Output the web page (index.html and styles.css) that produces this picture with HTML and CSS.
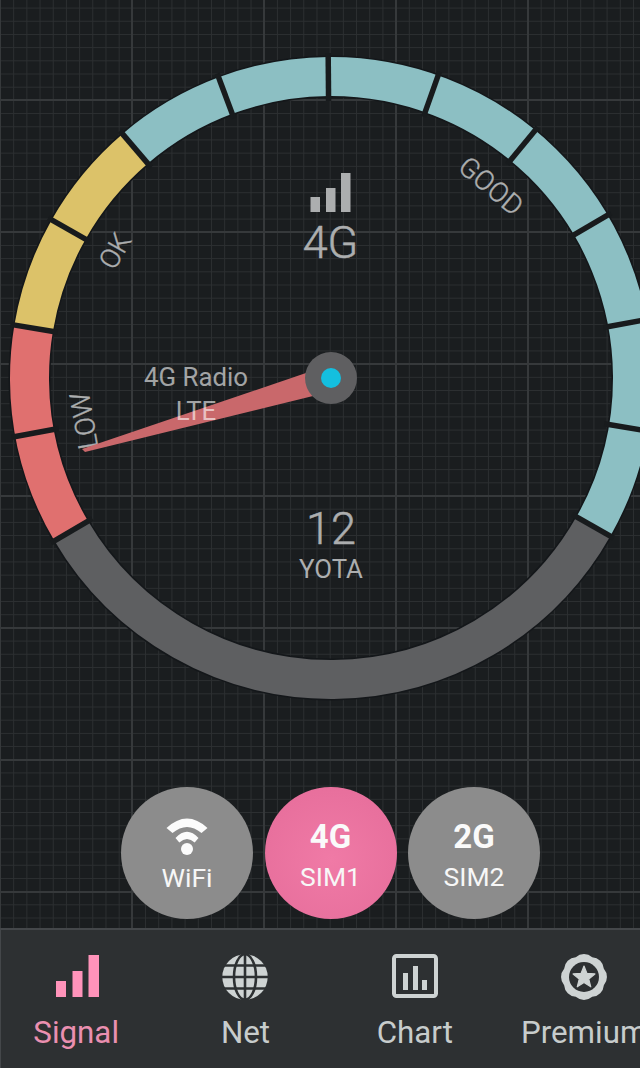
FILE: index.html
```html
<!DOCTYPE html>
<html lang="en">
<head>
<meta charset="utf-8">
<title>Signal</title>
<link rel="stylesheet" href="styles.css">
</head>
<body>
<div class="app">
  <main class="meter">
    <svg class="gauge" viewBox="0 0 640 787" width="640" height="787">
      <circle class="ring ring-edge" cx="331" cy="378" r="301.5"/>
      <g transform="rotate(-0.5 331 378)">
        <circle class="ring ring-off" cx="331" cy="378" r="301.5" pathLength="360" stroke-dasharray="120 240" stroke-dashoffset="-30"/>
        <circle class="ring ring-low" cx="331" cy="378" r="301.5" pathLength="360" stroke-dasharray="40 320" stroke-dashoffset="-150"/>
        <circle class="ring ring-ok" cx="331" cy="378" r="301.5" pathLength="360" stroke-dasharray="40 320" stroke-dashoffset="-190"/>
        <circle class="ring ring-good" cx="331" cy="378" r="301.5" pathLength="360" stroke-dasharray="160 200" stroke-dashoffset="-230"/>
        <line class="sep" x1="608" y1="378" x2="656" y2="378" transform="rotate(30 331 378)"/>
        <line class="sep" x1="608" y1="378" x2="656" y2="378" transform="rotate(10 331 378)"/>
        <line class="sep" x1="608" y1="378" x2="656" y2="378" transform="rotate(-10 331 378)"/>
        <line class="sep" x1="608" y1="378" x2="656" y2="378" transform="rotate(-30 331 378)"/>
        <line class="sep" x1="608" y1="378" x2="656" y2="378" transform="rotate(-50 331 378)"/>
        <line class="sep" x1="608" y1="378" x2="656" y2="378" transform="rotate(-70 331 378)"/>
        <line class="sep" x1="608" y1="378" x2="656" y2="378" transform="rotate(-90 331 378)"/>
        <line class="sep" x1="608" y1="378" x2="656" y2="378" transform="rotate(-110 331 378)"/>
        <line class="sep" x1="608" y1="378" x2="656" y2="378" transform="rotate(-130 331 378)"/>
        <line class="sep" x1="608" y1="378" x2="656" y2="378" transform="rotate(-150 331 378)"/>
        <line class="sep" x1="608" y1="378" x2="656" y2="378" transform="rotate(-170 331 378)"/>
        <line class="sep" x1="608" y1="378" x2="656" y2="378" transform="rotate(170 331 378)"/>
        <line class="sep" x1="608" y1="378" x2="656" y2="378" transform="rotate(150 331 378)"/>
      </g>

      <rect class="ink" x="310.5" y="197" width="9.5" height="15"/>
      <rect class="ink" x="326" y="188" width="9.5" height="24"/>
      <rect class="ink" x="341" y="173" width="9.5" height="39"/>

      <text class="t-big" x="330.5" y="258">4G</text>
      <text class="t-big" x="331" y="544">12</text>
      <text class="t-mid" x="331" y="578">YOTA</text>

      <text class="t-zone" transform="translate(115 251) rotate(-60) translate(0 9.5)">OK</text>
      <text class="t-zone" transform="translate(491 186) rotate(40) translate(0 9.5)">GOOD</text>
      <text class="t-zone" transform="translate(84 421) rotate(-100) translate(0 9.5)">LOW</text>

      <polygon class="needle" points="82,449 85,452 313,396 331,378 306,373"/>
      <text class="t-mid t-soft" x="196" y="386">4G Radio</text>
      <text class="t-mid t-soft" x="196" y="420">LTE</text>
      <circle class="hub" cx="331" cy="378" r="26"/>
      <circle class="hub-dot" cx="331" cy="378" r="10"/>
    </svg>

    <div class="modes">
      <button class="mode">
        <svg class="wifi" viewBox="-22 0 44 38" width="44" height="38">
          <path d="M-20.5 10Q0 -9 20.5 10L14.5 15Q0 3 -14.5 15Z"/>
          <path d="M-11.5 20Q0 7.5 11.5 20L7.7 24.5Q0 17.5 -7.7 24.5Z"/>
          <circle cx="0" cy="31" r="6"/>
        </svg>
        <span class="mode-sub">WiFi</span>
      </button>
      <button class="mode mode-on">
        <span class="mode-main">4G</span>
        <span class="mode-sub">SIM1</span>
      </button>
      <button class="mode">
        <span class="mode-main">2G</span>
        <span class="mode-sub">SIM2</span>
      </button>
    </div>
  </main>

  <nav class="tabs">
    <div class="tab tab-on">
      <svg class="tab-icon" viewBox="0 0 48 46" width="48" height="46">
        <rect x="4" y="27" width="10" height="16"/>
        <rect x="20.5" y="17" width="10" height="26"/>
        <rect x="36.5" y="1" width="10.5" height="42"/>
      </svg>
      <span>Signal</span>
    </div>
    <div class="tab">
      <svg class="tab-icon" viewBox="-24 -23 48 46" width="48" height="46">
        <circle r="22.7"/>
        <g class="globe-lines">
          <ellipse rx="11" ry="22.7"/>
          <line x1="0" y1="-23" x2="0" y2="23"/>
          <line x1="-23" y1="0" x2="23" y2="0"/>
          <line x1="-23" y1="-11.5" x2="23" y2="-11.5"/>
          <line x1="-23" y1="11.5" x2="23" y2="11.5"/>
        </g>
      </svg>
      <span>Net</span>
    </div>
    <div class="tab">
      <svg class="tab-icon" viewBox="0 0 48 46" width="48" height="46">
        <rect class="chart-box" x="3" y="2" width="42" height="40" rx="2.5"/>
        <rect x="12" y="19" width="5" height="17"/>
        <rect x="22" y="12" width="5" height="24"/>
        <rect x="31" y="26" width="5" height="10"/>
      </svg>
      <span>Chart</span>
    </div>
    <div class="tab">
      <svg class="tab-icon" viewBox="-24 -23 48 46" width="48" height="46">
        <path d="M8.23 -19.86A12.5 12.5 0 0 1 19.86 -8.23A12.5 12.5 0 0 1 19.86 8.23A12.5 12.5 0 0 1 8.23 19.86A12.5 12.5 0 0 1 -8.23 19.86A12.5 12.5 0 0 1 -19.86 8.23A12.5 12.5 0 0 1 -19.86 -8.23A12.5 12.5 0 0 1 -8.23 -19.86A12.5 12.5 0 0 1 8.23 -19.86Z"/>
        <circle class="badge-hole" r="15"/>
        <polygon class="badge-star" points="0,-11 2.94,-3.55 10.9,-3.05 4.76,2.05 6.76,9.8 0,5.5 -6.76,9.8 -4.76,2.05 -10.9,-3.05 -2.94,-3.55"/>
      </svg>
      <span>Premium</span>
    </div>
  </nav>
</div>
</body>
</html>
```

FILE: styles.css
```css
* { box-sizing: border-box; }

html, body {
  margin: 0;
  padding: 0;
  width: 640px;
  height: 1068px;
  overflow: hidden;
  background: #1a1d1f;
  font-family: Roboto, "Liberation Sans", sans-serif;
}

.app {
  display: flex;
  flex-direction: column;
  width: 640px;
  height: 1068px;
}

.meter {
  height: 928px;
  flex: none;
  background-color: #1a1d1f;
  background-image:
    linear-gradient(to right, #36393b 0, #36393b 2px, transparent 2px),
    linear-gradient(to bottom, #36393b 0, #36393b 2px, transparent 2px),
    linear-gradient(to right, #2c2f31 0, #2c2f31 1px, transparent 1px),
    linear-gradient(to bottom, #2c2f31 0, #2c2f31 1px, transparent 1px);
  background-size: 132px 132px, 132px 132px, 13.2px 13.2px, 13.2px 13.2px;
  background-position: -1px 0, 0 99px, 0 0, 0 7.6px;
}

.gauge { display: block; }

.ring { fill: none; stroke-width: 39; }
.ring-edge { stroke: #14171a; stroke-width: 42; }
.ring-off { stroke: #5e5f61; }
.ring-low { stroke: #e0706f; }
.ring-ok { stroke: #dcc269; }
.ring-good { stroke: #8cbfc3; }
.sep { stroke: #181b1d; stroke-width: 5.5; }

.ink { fill: #acaeaf; }
.needle { fill: #c9686b; }
.hub { fill: #5f5f61; }
.hub-dot { fill: #14bfdf; }

.gauge text { text-anchor: middle; fill: #acaeaf; }
.t-big { font-size: 45px; font-weight: 300; stroke: #acaeaf; stroke-width: 0.5px; }
.t-mid { font-size: 25.8px; font-weight: 400; }
.gauge .t-soft { fill: #ffffff; fill-opacity: 0.6; }
.t-zone { font-size: 27.5px; font-weight: 300; stroke: #acaeaf; stroke-width: 0.4px; }

.modes {
  display: flex;
  justify-content: center;
  gap: 11.5px;
  padding-left: 21px;
}

.mode {
  width: 132px;
  height: 132px;
  padding: 0;
  border: 0;
  border-radius: 50%;
  background: #8c8c8c;
  color: #f7f7f7;
  font-family: inherit;
  display: flex;
  flex-direction: column;
  align-items: center;
  justify-content: flex-start;
}

.mode-on {
  background: radial-gradient(circle at 50% 55%, #f07aa6 0, #e8709d 70%, #e56d99 100%);
}

.wifi {
  display: block;
  margin-top: 31px;
  fill: #fbfbfb;
}

.mode-main {
  display: block;
  margin-top: 30px;
  height: 39px;
  line-height: 39px;
  font-size: 33px;
  font-weight: 700;
  color: #fafafa;
}

.mode-sub {
  display: block;
  margin-top: 5px;
  line-height: 32px;
  font-size: 26.5px;
  font-weight: 400;
}

.wifi + .mode-sub { margin-top: 6px; }

.tabs {
  flex: none;
  height: 140px;
  display: flex;
  overflow: hidden;
  background: #2d3032;
  border-top: 2px solid #44474a;
  border-left: 1px solid #44474a;
}

.tab {
  flex: none;
  width: 169.33px;
  display: flex;
  flex-direction: column;
  align-items: center;
  color: #c7cccc;
  font-size: 31.3px;
  line-height: 36px;
  margin-top: 24px;
  fill: #ced3d3;
}

.tab:first-child { margin-left: -9.5px; }

.tab-on { color: #ea8fb0; fill: #ff93ba; }

.tab-icon { display: block; margin-bottom: 15px; }

.globe-lines { fill: none; stroke: #2d3032; stroke-width: 2.6; }
.chart-box { fill: none; stroke: #ced3d3; stroke-width: 4; }
.badge-hole { fill: #2d3032; }
.badge-star { fill: #ced3d3; stroke: #ced3d3; stroke-width: 1.2; stroke-linejoin: round; }
```
